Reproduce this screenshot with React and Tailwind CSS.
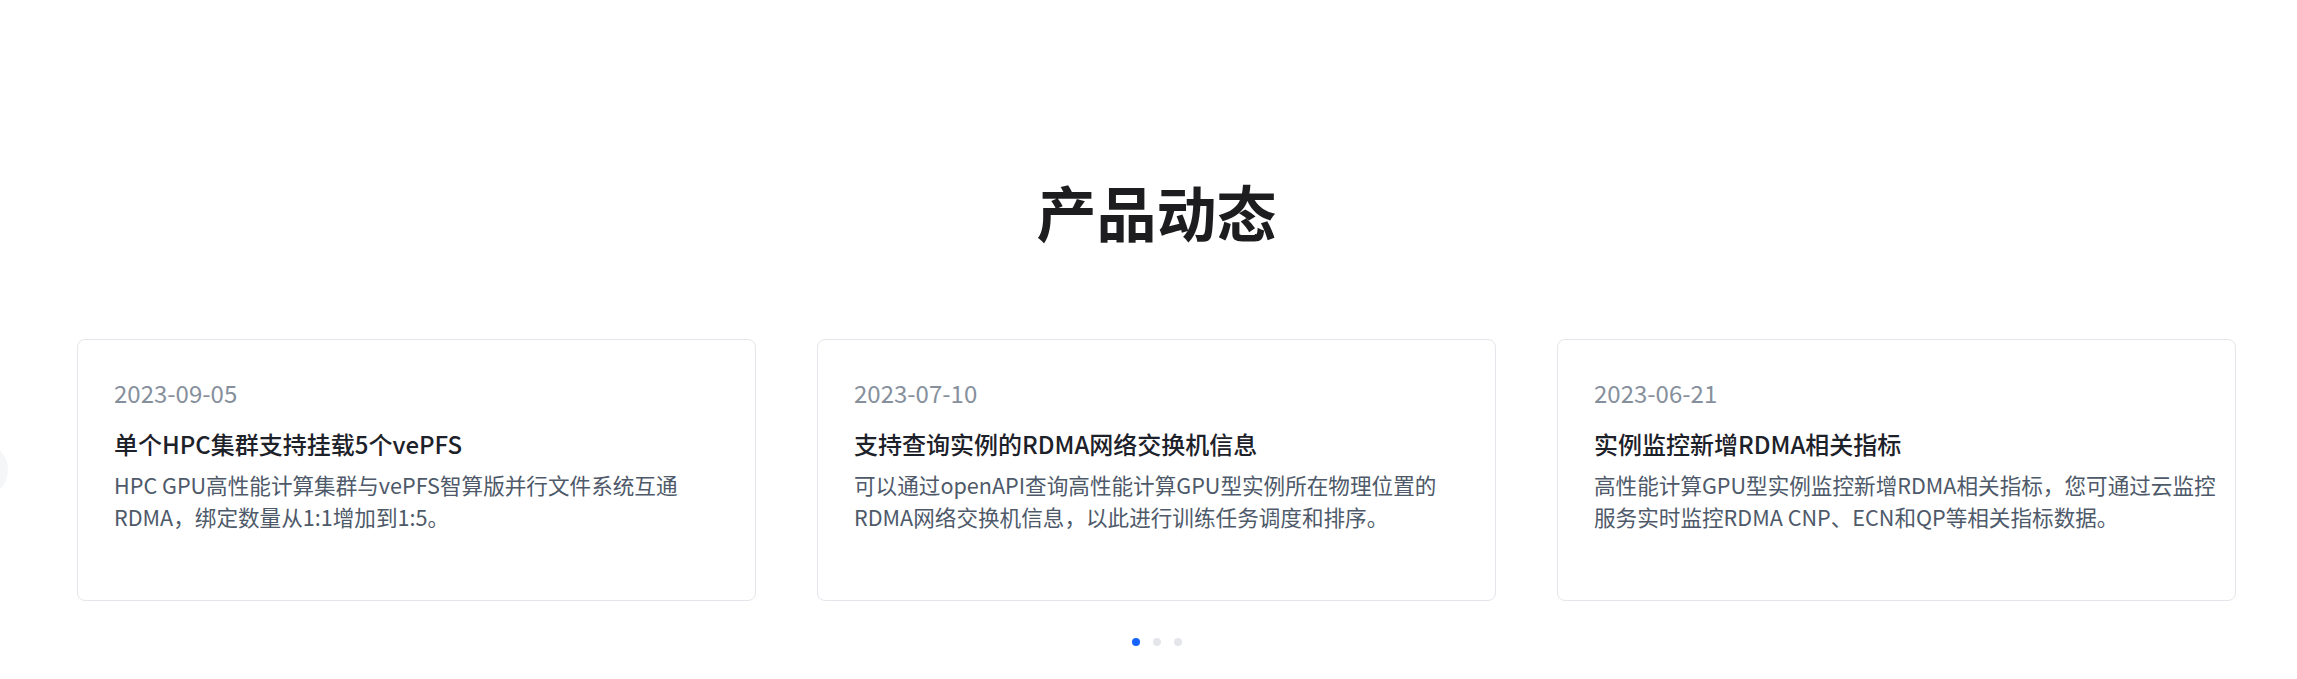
import React from 'react';

const news = [
  {
    date: '2023-09-05',
    title: '单个HPC集群支持挂载5个vePFS',
    desc: 'HPC GPU高性能计算集群与vePFS智算版并行文件系统互通RDMA，绑定数量从1:1增加到1:5。',
  },
  {
    date: '2023-07-10',
    title: '支持查询实例的RDMA网络交换机信息',
    desc: '可以通过openAPI查询高性能计算GPU型实例所在物理位置的RDMA网络交换机信息，以此进行训练任务调度和排序。',
  },
  {
    date: '2023-06-21',
    title: '实例监控新增RDMA相关指标',
    desc: '高性能计算GPU型实例监控新增RDMA相关指标，您可通过云监控服务实时监控RDMA CNP、ECN和QP等相关指标数据。',
  },
];

function NewsCard({ item }) {
  return (
    <div className="flex-1 h-[262px] bg-white border border-[#e5e6eb] rounded-lg pt-[37px] pl-[36px] pr-[6px]">
      <p className="text-[24px] leading-[32px] text-[#86909c]">{item.date}</p>
      <p className="mt-[19px] text-[24px] leading-[32px] font-medium text-[#1d2129]">{item.title}</p>
      <p className="mt-[9px] text-[21.6px] leading-[32px] text-[#4e5969] max-w-[632px]">{item.desc}</p>
    </div>
  );
}

export default function App() {
  return (
    <div
      className="relative w-full h-[679px] bg-white overflow-hidden pt-[181px]"
      style={{ fontFamily: '"Noto Sans CJK SC", "Noto Sans", sans-serif' }}
    >
      {/* carousel prev button, mostly off-screen */}
      <div className="absolute left-[-48px] top-[442px] w-[56px] h-[56px] rounded-full bg-[#f5f6f7]" />

      <div className="pl-[77px] pr-[61px]">
        <h2 className="text-center text-[60px] leading-[60px] font-bold text-[#1d1d1f]">产品动态</h2>

        <div className="mt-[98px] flex gap-[61px]">
          {news.map(n => <NewsCard key={n.date} item={n} />)}
        </div>

        {/* Pagination */}
        <div className="mt-[37px] flex justify-center gap-[13px]">
          <span className="w-[8px] h-[8px] rounded-full bg-[#1664ff]" />
          <span className="w-[8px] h-[8px] rounded-full bg-[#e5e6eb]" />
          <span className="w-[8px] h-[8px] rounded-full bg-[#e5e6eb]" />
        </div>
      </div>
    </div>
  );
}
